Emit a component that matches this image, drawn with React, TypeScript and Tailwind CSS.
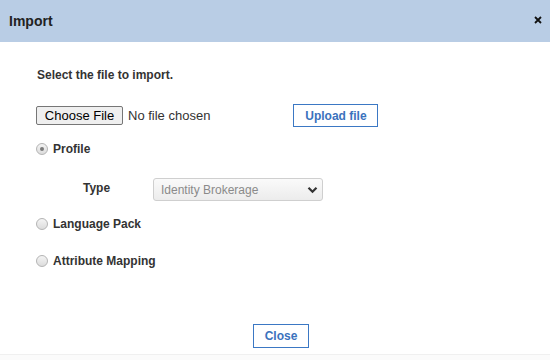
import React from "react";

function Radio({ checked }: { checked?: boolean }) {
  return (
    <span className="flex h-[12px] w-[12px] items-center justify-center rounded-full border border-[#b4b4b4] bg-gradient-to-b from-[#f4f4f4] to-[#dcdcdc]">
      {checked && <span className="h-[4px] w-[4px] rounded-full bg-[#7a7a7a]" />}
    </span>
  );
}

function Option({ label, checked }: { label: string; checked?: boolean }) {
  return (
    <label className="flex h-[14px] items-center gap-[5px] text-[12px] font-bold leading-[14px] text-[#333]">
      <Radio checked={checked} />
      <span>{label}</span>
    </label>
  );
}

export default function App() {
  return (
    <div
      className="flex h-[360px] w-[550px] flex-col bg-white text-[#333]"
      style={{ fontFamily: '"Liberation Sans", Arial, sans-serif' }}
    >
      <div className="flex h-[42px] shrink-0 items-center justify-between bg-[#b9cde5] pl-[9px] pr-[8px]">
        <span className="text-[14px] font-bold text-[#222]">Import</span>
        <svg width="8" height="8" viewBox="0 0 8 8" className="mt-[-2px]">
          <path d="M1 1 L7 7 M7 1 L1 7" stroke="#111" strokeWidth="1.8" />
        </svg>
      </div>

      <div className="flex flex-1 flex-col pl-[36px] pt-[26px]">
        <p className="pl-[1px] text-[12px] font-bold leading-[14px]">Select the file to import.</p>

        <div className="mt-[22px] flex h-[23px] items-center">
          <button className="h-[19px] w-[87px] rounded-[2px] border border-[#767676] bg-[#efefef] text-[13px] leading-[17px] text-black">
            Choose File
          </button>
          <span className="ml-[5px] text-[13px] text-[#333]">No file chosen</span>
          <button className="ml-[83px] h-[23px] w-[85px] border border-[#3b78c4] bg-white text-[12px] font-bold text-[#3b72bd]">
            Upload file
          </button>
        </div>

        <div className="mt-[15px]">
          <Option label="Profile" checked />
        </div>

        <div className="mt-[22px] flex h-[23px] items-center">
          <span className="mt-[-3px] w-[70px] pl-[47px] text-[12px] font-bold leading-[14px]">Type</span>
          <div className="ml-[47px] flex h-[23px] w-[170px] items-center justify-between rounded-[3px] border border-[#cfcfcf] bg-gradient-to-b from-[#fafafa] to-[#ececec] pl-[7px] pr-[4px]">
            <span className="text-[12px] text-[#8a8a8a]">Identity Brokerage</span>
            <svg width="11" height="8" viewBox="0 0 11 8">
              <path d="M1.5 1.8 L5.5 5.8 L9.5 1.8" fill="none" stroke="#333" strokeWidth="2.2" />
            </svg>
          </div>
        </div>

        <div className="mt-[16px]">
          <Option label="Language Pack" />
        </div>

        <div className="mt-[23px]">
          <Option label="Attribute Mapping" />
        </div>

        <div className="mt-[55px] pl-[217px]">
          <button className="h-[24px] w-[56px] border border-[#3b78c4] bg-white text-[12px] font-bold text-[#3b72bd]">
            Close
          </button>
        </div>
      </div>
      <div className="h-[6px] shrink-0 border-t border-[#f0f0f0] bg-[#fbfbfb]" />
    </div>
  );
}
